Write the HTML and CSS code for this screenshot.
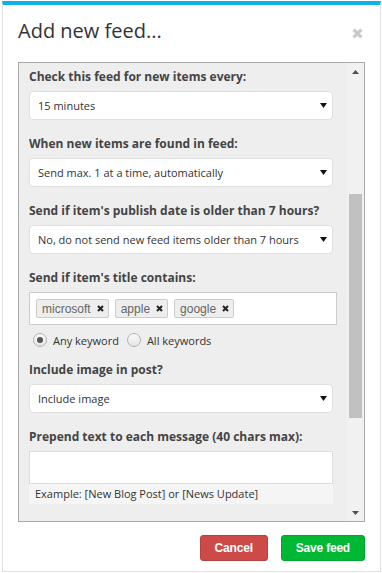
FILE: index.html
```html
<!DOCTYPE html>
<html lang="en">
<head>
    <meta charset="UTF-8">
    <meta name="viewport" content="width=device-width, initial-scale=1.0">
    <title>Add new feed</title>
    <link rel="stylesheet" href="styles.css">
</head>
<body>
    <div class="modal">
        <div class="modal-header">
            <h2 class="modal-title">Add new feed...</h2>
            <button class="close" type="button" aria-label="Close">
                <svg width="11" height="11" viewBox="0 0 11 11"><path d="M1.6 1.6 L9.4 9.4 M9.4 1.6 L1.6 9.4"/></svg>
            </button>
        </div>

        <div class="feed-box">
            <div class="feed-form">
                <div class="form-group">
                    <label for="interval">Check this feed for new items every:</label>
                    <div class="select">
                        <select id="interval">
                            <option>15 minutes</option>
                            <option>30 minutes</option>
                            <option>1 hour</option>
                        </select>
                        <svg class="caret" width="7" height="5" viewBox="0 0 7 5"><polygon points="0,0 7,0 3.5,5"/></svg>
                    </div>
                </div>

                <div class="form-group">
                    <label for="mode">When new items are found in feed:</label>
                    <div class="select">
                        <select id="mode">
                            <option>Send max. 1 at a time, automatically</option>
                            <option>Send all, automatically</option>
                        </select>
                        <svg class="caret" width="7" height="5" viewBox="0 0 7 5"><polygon points="0,0 7,0 3.5,5"/></svg>
                    </div>
                </div>

                <div class="form-group">
                    <label for="age">Send if item's publish date is older than 7 hours?</label>
                    <div class="select">
                        <select id="age">
                            <option>No, do not send new feed items older than 7 hours</option>
                            <option>Yes, send them anyway</option>
                        </select>
                        <svg class="caret" width="7" height="5" viewBox="0 0 7 5"><polygon points="0,0 7,0 3.5,5"/></svg>
                    </div>
                </div>

                <div class="form-group keywords">
                    <label>Send if item's title contains:</label>
                    <div class="tag-input">
                        <span class="tag">microsoft <svg width="7" height="7" viewBox="0 0 7 7"><path d="M1 1 L6 6 M6 1 L1 6"/></svg></span>
                        <span class="tag">apple <svg width="7" height="7" viewBox="0 0 7 7"><path d="M1 1 L6 6 M6 1 L1 6"/></svg></span>
                        <span class="tag">google <svg width="7" height="7" viewBox="0 0 7 7"><path d="M1 1 L6 6 M6 1 L1 6"/></svg></span>
                    </div>
                    <div class="radio-row">
                        <label class="radio"><input type="radio" name="match" checked> Any keyword</label>
                        <label class="radio"><input type="radio" name="match"> All keywords</label>
                    </div>
                </div>

                <div class="form-group">
                    <label for="image">Include image in post?</label>
                    <div class="select">
                        <select id="image">
                            <option>Include image</option>
                            <option>Do not include image</option>
                        </select>
                        <svg class="caret" width="7" height="5" viewBox="0 0 7 5"><polygon points="0,0 7,0 3.5,5"/></svg>
                    </div>
                </div>

                <div class="form-group">
                    <label for="prefix">Prepend text to each message (40 chars max):</label>
                    <input type="text" id="prefix" maxlength="40">
                    <div class="help">Example: [New Blog Post] or [News Update]</div>
                </div>
            </div>

            <div class="scrollbar">
                <div class="scroll-btn"><svg width="7" height="4" viewBox="0 0 7 4"><polygon points="0,4 7,4 3.5,0"/></svg></div>
                <div class="scroll-track"><div class="scroll-thumb"></div></div>
                <div class="scroll-btn"><svg width="7" height="4" viewBox="0 0 7 4"><polygon points="0,0 7,0 3.5,4"/></svg></div>
            </div>
        </div>

        <div class="modal-footer">
            <button class="btn btn-cancel" type="button">Cancel</button>
            <button class="btn btn-save" type="button">Save feed</button>
        </div>
    </div>
</body>
</html>
```

FILE: styles.css
```css
* {
    box-sizing: border-box;
    margin: 0;
    padding: 0;
}

body {
    font-family: 'Open Sans', 'Liberation Sans', sans-serif;
    background-color: #fff;
    color: #333;
}

.modal {
    margin: 1px 1px 0 2px;
    background: white;
    border: 1px solid #e2e2e2;
    border-top: 4px solid #0db1ea;
}

.modal-header {
    display: flex;
    justify-content: space-between;
    align-items: center;
    padding: 12px 15px 0;
}

.modal-title {
    font-size: 20px;
    font-weight: 400;
    line-height: 28px;
    color: #333;
}

.close {
    display: flex;
    border: none;
    background: none;
    margin: 5px 2px 0 0;
    cursor: pointer;
}

.close path {
    stroke: #c9c9c9;
    stroke-width: 3.2;
}

.feed-box {
    display: flex;
    height: 460px;
    margin: 17px 15px 0;
    background: #eee;
    border: 1px solid #aaa;
}

.feed-form {
    flex: 1;
    overflow: hidden;
    padding: 5px 10px 0;
}

.form-group {
    margin-bottom: 15px;
}

.form-group.keywords {
    margin-bottom: 12px;
}

.form-group > label {
    display: block;
    font-size: 12px;
    font-weight: 700;
    line-height: 18px;
    color: #444;
    margin-bottom: 5px;
}

.select {
    position: relative;
    width: 304px;
}

select {
    appearance: none;
    -webkit-appearance: none;
    display: block;
    width: 100%;
    height: 29px;
    padding: 0 8px;
    font-family: 'Open Sans', sans-serif;
    font-size: 11px;
    color: #333;
    background: white;
    border: 1px solid #e0e0e0;
    border-radius: 4px;
}

.caret {
    position: absolute;
    right: 6px;
    top: 12px;
    fill: #111;
    pointer-events: none;
}

.tag-input {
    display: flex;
    gap: 6px;
    height: 33px;
    padding: 6px;
    background: white;
    border: 1px solid #ccc;
}

.tag {
    display: inline-flex;
    align-items: center;
    gap: 6px;
    height: 19px;
    padding: 0 4px 0 5px;
    font-family: 'Liberation Sans', Arial, sans-serif;
    font-size: 12px;
    color: #666;
    background: #eee;
    border: 1px solid #ccc;
    border-radius: 2px;
}

.tag path {
    stroke: #222;
    stroke-width: 2;
}

.radio-row {
    display: flex;
    align-items: center;
    height: 18px;
    margin-top: 6px;
    padding-left: 4px;
}

.radio {
    display: flex;
    align-items: center;
    gap: 6px;
    font-size: 11px;
    color: #333;
    margin-right: 8px;
}

.radio input {
    appearance: none;
    -webkit-appearance: none;
    width: 14px;
    height: 14px;
    border: 1px solid #b4b4b4;
    border-radius: 50%;
    background: linear-gradient(#fafafa, #e4e4e4);
    display: grid;
    place-items: center;
}

.radio input:checked::after {
    content: '';
    width: 6px;
    height: 6px;
    border-radius: 50%;
    background: #555;
}

input[type="text"] {
    display: block;
    width: 304px;
    height: 33px;
    padding: 0 8px;
    background: white;
    border: 1px solid #ddd;
    font-family: 'Open Sans', sans-serif;
    font-size: 11px;
}

.help {
    width: 304px;
    height: 20px;
    line-height: 20px;
    padding-left: 6px;
    font-size: 11px;
    color: #333;
    background: #f5f5f5;
}

.scrollbar {
    display: flex;
    flex-direction: column;
    width: 17px;
    background: #f1f1f1;
}

.scroll-btn {
    display: flex;
    align-items: center;
    justify-content: center;
    height: 17px;
    fill: #505050;
}

.scroll-track {
    flex: 1;
}

.scroll-thumb {
    height: 224px;
    margin: 114px 2px 0;
    background: #c1c1c1;
}

.modal-footer {
    display: flex;
    justify-content: flex-end;
    gap: 13px;
    padding: 13px 15px 10px;
}

.btn {
    height: 26px;
    padding: 0 14px;
    font-family: 'Liberation Sans', Arial, sans-serif;
    font-size: 12px;
    font-weight: 700;
    letter-spacing: -0.2px;
    color: white;
    border-radius: 3px;
    cursor: pointer;
}

.btn-cancel {
    background-color: #cc4b48;
    border: 1px solid #b8423f;
}

.btn-save {
    background-color: #00b833;
    border: 1px solid #00a52d;
}
```
